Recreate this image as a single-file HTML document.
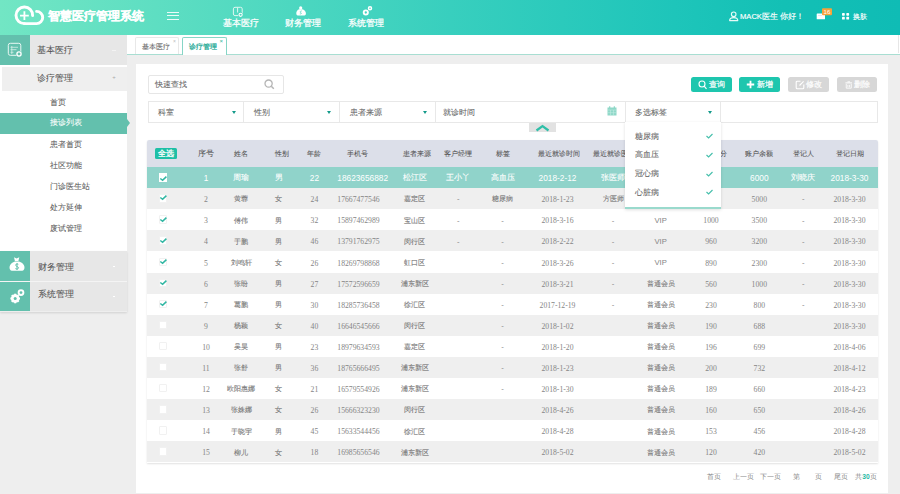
<!DOCTYPE html><html><head><meta charset="utf-8"><style>
*{margin:0;padding:0;box-sizing:border-box}
html,body{width:900px;height:494px;overflow:hidden;background:#eeeeee;font-family:"Liberation Sans", sans-serif}
.a{position:absolute}
.t{position:absolute;white-space:nowrap;line-height:1}
</style></head><body>
<div class="a" style="left:0;top:0;width:900px;height:35px;background:linear-gradient(90deg,#72e6c4 0%,#38cfbe 50%,#1ec5ba 75%,#13c0b5 87%,#0fbcb5 100%)"></div>
<svg class="a" style="left:0;top:0" width="60" height="35" viewBox="0 0 60 35">
<path d="M24.4 23.6 A8.3 8.3 0 1 1 32.6 15.6" fill="none" stroke="#fff" stroke-width="2.9" stroke-linecap="round"/>
<path d="M36.6 11.4 A6.1 6.1 0 0 1 36.6 23.6 L24.4 23.6" fill="none" stroke="#fff" stroke-width="2.9" stroke-linecap="round"/>
<path d="M20 15.7 H28.8 M24.4 11.3 V20.1" stroke="#fff" stroke-width="1.8"/>
</svg>
<span class="t" style="left:48.3px;top:16px;font-size:12px;color:#fff;transform:translateY(-50%);font-weight:bold;-webkit-text-stroke:.15px #fff;">智慧医疗管理系统</span>
<div class="a" style="left:167px;top:11.8px;width:12px;height:1.3px;background:rgba(255,255,255,.88)"></div>
<div class="a" style="left:167px;top:15.2px;width:12px;height:1.3px;background:rgba(255,255,255,.88)"></div>
<div class="a" style="left:167px;top:18.5px;width:12px;height:1.3px;background:rgba(255,255,255,.88)"></div>
<span class="t" style="left:241px;top:23px;font-size:8.6px;color:#fff;transform:translate(-50%,-50%);font-weight:normal;-webkit-text-stroke:.25px #fff;">基本医疗</span>
<span class="t" style="left:303px;top:23px;font-size:8.6px;color:#fff;transform:translate(-50%,-50%);font-weight:normal;-webkit-text-stroke:.25px #fff;">财务管理</span>
<span class="t" style="left:366px;top:23px;font-size:8.6px;color:#fff;transform:translate(-50%,-50%);font-weight:normal;-webkit-text-stroke:.25px #fff;">系统管理</span>
<svg class="a" style="left:0;top:0" width="400" height="20" viewBox="0 0 400 20">
<rect x="233.4" y="7.3" width="8.8" height="8.3" rx="1.6" fill="none" stroke="#dff7f1" stroke-width="1"/>
<path d="M237.6 7.5 V12.5" stroke="#dff7f1" stroke-width="1"/>
<circle cx="240.6" cy="14.8" r="2.5" fill="#50d4bd"/>
<circle cx="240.6" cy="14.8" r="1.6" fill="none" stroke="#fff" stroke-width="1.1"/>
<circle cx="300.7" cy="7.9" r="1.6" fill="#fff"/>
<path d="M299.2 9.3 C295.5 10.5 295.6 15.6 297.8 15.6 H304.4 C306.6 15.6 306.8 10.5 302.2 9.3 Z" fill="#fff"/>
<path d="M301.8 11 C300.3 10.8 299.6 12.2 300.7 12.6 C301.9 13 301.4 14.3 299.8 14" fill="none" stroke="#48d2bd" stroke-width=".7"/>
<circle cx="365.8" cy="12.5" r="2.1" fill="none" stroke="#fff" stroke-width="1.9"/>
<circle cx="370" cy="8.3" r="1.5" fill="none" stroke="#fff" stroke-width="1.5"/>
</svg>
<svg class="a" style="left:720px;top:0" width="180" height="30" viewBox="720 0 180 30">
<circle cx="733.7" cy="14.3" r="2.3" fill="none" stroke="#e6fbf7" stroke-width="1.1"/>
<path d="M729.6 20.6 C729.6 16.6 737.8 16.6 737.8 20.6 Z" fill="none" stroke="#e6fbf7" stroke-width="1.1" stroke-linejoin="round"/>
<rect x="816.7" y="13.5" width="8.3" height="5.8" rx=".6" fill="#fff"/>
<path d="M818 15.6 H822" stroke="#9ad" stroke-width=".5" opacity=".6"/>
<rect x="822" y="8.3" width="10" height="7" rx="1" fill="#f7a23b"/>
<text x="827" y="14" font-size="6.2" fill="#fff" text-anchor="middle" font-family="Liberation Sans">16</text>
<g fill="#fff"><rect x="842" y="13" width="2.8" height="2.8" rx=".7"/><rect x="846.3" y="13" width="2.8" height="2.8" rx=".7"/>
<rect x="842" y="16.8" width="2.8" height="2.8" rx=".7"/><rect x="846.3" y="16.8" width="2.8" height="2.8" rx=".7"/></g>
</svg>
<span class="t" style="left:740px;top:17px;font-size:7.6px;color:#fff;transform:translateY(-50%);font-weight:normal;-webkit-text-stroke:.15px #fff;">MACK医生 你好！</span>
<span class="t" style="left:853.3px;top:16.8px;font-size:7.4px;color:#fff;transform:translateY(-50%);font-weight:normal;-webkit-text-stroke:.15px #fff;">换肤</span>
<div class="a" style="left:0;top:35px;width:127px;height:276px;background:#fff"></div>
<div class="a" style="left:0;top:35px;width:29.5px;height:30px;background:#63c0ad"></div>
<div class="a" style="left:29.5px;top:35px;width:97.5px;height:30px;background:#e7e7e7"></div>
<span class="t" style="left:37px;top:50px;font-size:8.7px;color:#555;transform:translateY(-50%);font-weight:normal;-webkit-text-stroke:.07px #555;">基本医疗</span>
<div class="a" style="left:112px;top:50px;width:4px;height:1px;background:#f3f3f3"></div>
<svg class="a" style="left:7px;top:42px" width="16" height="16" viewBox="0 0 16 16">
<rect x="1.3" y="1.3" width="12.5" height="12" rx="2" fill="none" stroke="#e8f7f3" stroke-width="1"/>
<path d="M3.5 5.3h7.5M3.5 7.7h6M3.5 10.3h3M4.8 4v8" stroke="#e8f7f3" stroke-width=".8" opacity=".85"/>
<circle cx="12" cy="12" r="3" fill="#63c0ad"/>
<circle cx="12" cy="12" r="2.1" fill="none" stroke="#fff" stroke-width="1.3"/></svg>
<div class="a" style="left:1.5px;top:66.5px;width:125.5px;height:24.7px;background:#efefef"></div>
<span class="t" style="left:37px;top:78px;font-size:8.7px;color:#555;transform:translateY(-50%);font-weight:normal;-webkit-text-stroke:.07px #555;">诊疗管理</span>
<span class="t" style="left:114px;top:77px;font-size:6px;color:#aaa;transform:translate(-50%,-50%);font-weight:normal;">+</span>
<div class="a" style="left:0;top:113px;width:127px;height:21px;background:#63c0ad"></div>
<div class="a" style="left:127px;top:119px;width:0;height:0;border-top:4px solid transparent;border-bottom:4px solid transparent;border-left:3px solid #63c0ad"></div>
<span class="t" style="left:49.5px;top:103px;font-size:7.5px;color:#606060;transform:translateY(-50%);font-weight:normal;-webkit-text-stroke:.07px #606060;">首页</span>
<span class="t" style="left:49.5px;top:123.3px;font-size:7.5px;color:#fff;transform:translateY(-50%);font-weight:normal;-webkit-text-stroke:.07px #fff;">接诊列表</span>
<span class="t" style="left:49.5px;top:144.5px;font-size:7.5px;color:#606060;transform:translateY(-50%);font-weight:normal;-webkit-text-stroke:.07px #606060;">患者首页</span>
<span class="t" style="left:49.5px;top:165.7px;font-size:7.5px;color:#606060;transform:translateY(-50%);font-weight:normal;-webkit-text-stroke:.07px #606060;">社区功能</span>
<span class="t" style="left:49.5px;top:186.9px;font-size:7.5px;color:#606060;transform:translateY(-50%);font-weight:normal;-webkit-text-stroke:.07px #606060;">门诊医生站</span>
<span class="t" style="left:49.5px;top:208.1px;font-size:7.5px;color:#606060;transform:translateY(-50%);font-weight:normal;-webkit-text-stroke:.07px #606060;">处方延伸</span>
<span class="t" style="left:49.5px;top:229.2px;font-size:7.5px;color:#606060;transform:translateY(-50%);font-weight:normal;-webkit-text-stroke:.07px #606060;">废试管理</span>
<div class="a" style="left:0;top:250.5px;width:127px;height:61px;box-shadow:0 1px 2px rgba(0,0,0,.12)"></div>
<div class="a" style="left:0;top:250.5px;width:29.5px;height:30px;background:#63c0ad"></div>
<div class="a" style="left:29.5px;top:250.5px;width:97.5px;height:30px;background:#e7e7e7"></div>
<span class="t" style="left:37.5px;top:266.8px;font-size:8.7px;color:#555;transform:translateY(-50%);font-weight:normal;-webkit-text-stroke:.07px #555;">财务管理</span>
<div class="a" style="left:113px;top:265.5px;width:2px;height:1px;background:#fff"></div>
<div class="a" style="left:0;top:281px;width:29.5px;height:30px;background:#63c0ad"></div>
<div class="a" style="left:29.5px;top:281px;width:97.5px;height:30px;background:#e7e7e7"></div>
<span class="t" style="left:37.5px;top:294px;font-size:8.7px;color:#555;transform:translateY(-50%);font-weight:normal;-webkit-text-stroke:.07px #555;">系统管理</span>
<div class="a" style="left:113px;top:296px;width:2px;height:1px;background:#fff"></div>
<div class="a" style="left:0;top:280.5px;width:127px;height:0.8px;background:#f4f4f4"></div>
<svg class="a" style="left:0;top:250px" width="29" height="60" viewBox="0 250 29 60">
<path d="M14 257.3 L16.6 258.6 L19.3 257.3 L18.4 261 H14.9 Z" fill="#fff"/>
<path d="M15 261.6 C8 263.5 8.5 270.8 12 270.8 H22 C25.5 270.8 26 263.5 19 261.6 Z" fill="#fff"/>
<path d="M18.3 264.3 C16.8 263.6 15.3 264.3 15.8 265.6 C16.3 266.6 18.4 266.5 18.5 267.8 C18.6 269 16.6 269.3 15.4 268.6 M17 263 V270" fill="none" stroke="#63c0ad" stroke-width="1"/>
<g transform="translate(15.2 298.5)">
<circle r="3.1" fill="none" stroke="#fff" stroke-width="2.4"/>
<g fill="#fff"><rect x="-1" y="-4.8" width="2" height="9.6"/><rect x="-4.8" y="-1" width="9.6" height="2"/>
<rect x="-1" y="-4.8" width="2" height="9.6" transform="rotate(45)"/><rect x="-1" y="-4.8" width="2" height="9.6" transform="rotate(-45)"/></g>
<circle r="1.5" fill="#63c0ad"/></g>
<circle cx="21" cy="292.6" r="2.4" fill="none" stroke="#fff" stroke-width="1.9"/>
</svg>
<div class="a" style="left:127px;top:35px;width:773px;height:19px;background:#fff"></div>
<div class="a" style="left:127px;top:53.5px;width:773px;height:1.4px;background:#a8ded2"></div>
<div class="a" style="left:897.5px;top:35px;width:1px;height:18px;background:#e6e6e6"></div>
<div class="a" style="left:135px;top:37px;width:43.5px;height:17px;border:1px solid #e8e8e8;border-bottom:none;border-radius:2px 2px 0 0;background:#fff"></div>
<span class="t" style="left:142px;top:47px;font-size:7.3px;color:#666;transform:translateY(-50%);font-weight:normal;-webkit-text-stroke:.07px #666;">基本医疗</span>
<span class="t" style="left:174.5px;top:40.5px;font-size:5px;color:#bbb;transform:translate(-50%,-50%);font-weight:normal;">×</span>
<div class="a" style="left:181.5px;top:37px;width:45px;height:17.5px;border:1.3px solid #86d5c6;border-bottom:none;border-radius:2px 2px 0 0;background:#fff"></div>
<span class="t" style="left:188.5px;top:46.6px;font-size:7.3px;color:#2aab98;transform:translateY(-50%);font-weight:normal;-webkit-text-stroke:.25px #2aab98;">诊疗管理</span>
<span class="t" style="left:221.2px;top:40.5px;font-size:6px;color:#2bb59c;transform:translate(-50%,-50%);font-weight:normal;">×</span>
<div class="a" style="left:136px;top:64px;width:751.7px;height:428.5px;background:#fff"></div>
<div class="a" style="left:147.5px;top:74.5px;width:136px;height:19.5px;border:1px solid #e6e6e6;border-radius:2px"></div>
<span class="t" style="left:154.6px;top:84.5px;font-size:7.8px;color:#666;transform:translateY(-50%);font-weight:normal;-webkit-text-stroke:.07px #666;">快速查找</span>
<svg class="a" style="left:264px;top:78.5px" width="12" height="12" viewBox="0 0 12 12">
<circle cx="4.6" cy="4.6" r="3.6" fill="none" stroke="#b5b5b5" stroke-width="1.3"/>
<path d="M7.3 7.3 L9.8 9.8" stroke="#b5b5b5" stroke-width="1.5"/></svg>
<div class="a" style="left:691.2px;top:76.6px;width:40.5px;height:15.7px;background:#1ec6ae;border-radius:2.5px"></div>
<span class="t" style="left:708.7px;top:84.5px;font-size:7.8px;color:#fff;transform:translateY(-50%);font-weight:normal;-webkit-text-stroke:.2px #fff;">查询</span>
<svg class="a" style="left:697.7px;top:79.5px" width="9" height="10" viewBox="0 0 9 10"><circle cx="4" cy="4" r="3" fill="none" stroke="#fff" stroke-width="1.1"/><path d="M6.2 6.2 L8.5 8.8" stroke="#fff" stroke-width="1.2"/></svg>
<div class="a" style="left:739.4px;top:76.6px;width:40.5px;height:15.7px;background:#1ec6ae;border-radius:2.5px"></div>
<span class="t" style="left:756.9px;top:84.5px;font-size:7.8px;color:#fff;transform:translateY(-50%);font-weight:normal;-webkit-text-stroke:.2px #fff;">新增</span>
<svg class="a" style="left:745.9px;top:80px" width="9" height="9" viewBox="0 0 9 9"><path d="M4.5 .8V8.2M.8 4.5H8.2" stroke="#fff" stroke-width="1.8"/></svg>
<div class="a" style="left:788.3px;top:76.6px;width:40.5px;height:15.7px;background:#d7d7d7;border-radius:2.5px"></div>
<span class="t" style="left:805.8px;top:84.5px;font-size:7.8px;color:#fff;transform:translateY(-50%);font-weight:normal;-webkit-text-stroke:.2px #fff;">修改</span>
<svg class="a" style="left:794.8px;top:79.8px" width="10" height="10" viewBox="0 0 10 10"><path d="M5.5 1.2H2.2C1.6 1.2 1.2 1.6 1.2 2.2V7.8C1.2 8.4 1.6 8.8 2.2 8.8H7.8C8.4 8.8 8.8 8.4 8.8 7.8V4.5" fill="none" stroke="#fff" stroke-width="1.1"/><path d="M4.5 5.5L8.6 1.4" stroke="#fff" stroke-width="1.1"/></svg>
<div class="a" style="left:836.8px;top:76.6px;width:40.5px;height:15.7px;background:#d7d7d7;border-radius:2.5px"></div>
<span class="t" style="left:854.3px;top:84.5px;font-size:7.8px;color:#fff;transform:translateY(-50%);font-weight:normal;-webkit-text-stroke:.2px #fff;">删除</span>
<svg class="a" style="left:844.8px;top:80.5px" width="7.5" height="8.5" viewBox="0 0 9 10"><path d="M0.5 2.2H8.5M3 1H6" stroke="#fff" stroke-width="1.2"/><path d="M1.5 3.5V8.5H7.5V3.5M3.5 4.5V7.5M5.5 4.5V7.5" fill="none" stroke="#fff" stroke-width="1"/></svg>
<div class="a" style="left:147.5px;top:101px;width:730.5px;height:21.5px;border:1px solid #e8e8e8"></div>
<div class="a" style="left:243px;top:101px;width:1px;height:21.5px;background:#e8e8e8"></div>
<div class="a" style="left:338.5px;top:101px;width:1px;height:21.5px;background:#e8e8e8"></div>
<div class="a" style="left:434.5px;top:101px;width:1px;height:21.5px;background:#e8e8e8"></div>
<div class="a" style="left:624.5px;top:101px;width:1px;height:21.5px;background:#e8e8e8"></div>
<div class="a" style="left:720px;top:101px;width:1px;height:21.5px;background:#e8e8e8"></div>
<span class="t" style="left:158px;top:112.7px;font-size:7.8px;color:#666;transform:translateY(-50%);font-weight:normal;-webkit-text-stroke:.07px #666;">科室</span>
<div class="a" style="left:231.5px;top:110.5px;width:0;height:0;border-left:2.2px solid transparent;border-right:2.2px solid transparent;border-top:3px solid #139a8a"></div>
<span class="t" style="left:254px;top:112.7px;font-size:7.8px;color:#666;transform:translateY(-50%);font-weight:normal;-webkit-text-stroke:.07px #666;">性别</span>
<div class="a" style="left:327px;top:110.5px;width:0;height:0;border-left:2.2px solid transparent;border-right:2.2px solid transparent;border-top:3px solid #139a8a"></div>
<span class="t" style="left:349.5px;top:112.7px;font-size:7.8px;color:#666;transform:translateY(-50%);font-weight:normal;-webkit-text-stroke:.07px #666;">患者来源</span>
<div class="a" style="left:422.6px;top:110.5px;width:0;height:0;border-left:2.2px solid transparent;border-right:2.2px solid transparent;border-top:3px solid #139a8a"></div>
<span class="t" style="left:443px;top:112.7px;font-size:7.6px;color:#666;transform:translateY(-50%);font-weight:normal;-webkit-text-stroke:.07px #666;">就诊时间</span>
<span class="t" style="left:635.3px;top:112.7px;font-size:7.8px;color:#666;transform:translateY(-50%);font-weight:normal;-webkit-text-stroke:.07px #666;">多选标签</span>
<div class="a" style="left:708px;top:110.5px;width:0;height:0;border-left:2.2px solid transparent;border-right:2.2px solid transparent;border-top:3px solid #139a8a"></div>
<svg class="a" style="left:607px;top:106px" width="10" height="10" viewBox="0 0 10 10">
<rect x=".5" y="1.5" width="9" height="8" fill="#8fd8c8"/>
<rect x="2" y=".3" width="1.3" height="2.5" fill="#8fd8c8"/><rect x="6.7" y=".3" width="1.3" height="2.5" fill="#8fd8c8"/>
<path d="M.5 4H9.5M3.5 4V9.5M6.5 4V9.5M.5 6.7H9.5" stroke="#c8eee6" stroke-width=".5"/></svg>
<div class="a" style="left:529px;top:122.5px;width:27px;height:9.5px;background:#e2e2e2"></div>
<svg class="a" style="left:535px;top:123.5px" width="15" height="8" viewBox="0 0 15 8">
<path d="M1.5 6.5 L7.5 2 L13.5 6.5" fill="none" stroke="#2fbfa8" stroke-width="2.2"/></svg>
<div class="a" style="left:147px;top:140px;width:731px;height:323px;box-shadow:0 1px 2px rgba(0,0,0,.12);border-radius:2px 2px 0 0"></div>
<div class="a" style="left:147px;top:140px;width:731px;height:27px;background:#dcdfe9;border-radius:2px 2px 0 0"></div>
<div class="a" style="left:155.3px;top:148.4px;width:22px;height:10.7px;background:#1ebfa6;border-radius:1.5px"></div>
<span class="t" style="left:166.3px;top:153.8px;font-size:7.7px;color:#fff;transform:translate(-50%,-50%);font-weight:normal;-webkit-text-stroke:.3px #fff;">全选</span>
<span class="t" style="left:206px;top:154px;font-size:8px;color:#555;transform:translate(-50%,-50%);font-weight:normal;-webkit-text-stroke:.07px #555;">序号</span>
<span class="t" style="left:241px;top:154px;font-size:6.8px;color:#555;transform:translate(-50%,-50%);font-weight:normal;-webkit-text-stroke:.07px #555;">姓名</span>
<span class="t" style="left:282px;top:154px;font-size:6.8px;color:#555;transform:translate(-50%,-50%);font-weight:normal;-webkit-text-stroke:.07px #555;">性别</span>
<span class="t" style="left:314.4px;top:154px;font-size:6.8px;color:#555;transform:translate(-50%,-50%);font-weight:normal;-webkit-text-stroke:.07px #555;">年龄</span>
<span class="t" style="left:357.3px;top:154px;font-size:6.8px;color:#555;transform:translate(-50%,-50%);font-weight:normal;-webkit-text-stroke:.07px #555;">手机号</span>
<span class="t" style="left:416.5px;top:154px;font-size:6.8px;color:#555;transform:translate(-50%,-50%);font-weight:normal;-webkit-text-stroke:.07px #555;">患者来源</span>
<span class="t" style="left:458.3px;top:154px;font-size:6.8px;color:#555;transform:translate(-50%,-50%);font-weight:normal;-webkit-text-stroke:.07px #555;">客户经理</span>
<span class="t" style="left:502.7px;top:154px;font-size:6.8px;color:#555;transform:translate(-50%,-50%);font-weight:normal;-webkit-text-stroke:.07px #555;">标签</span>
<span class="t" style="left:559.3px;top:154px;font-size:6.8px;color:#555;transform:translate(-50%,-50%);font-weight:normal;-webkit-text-stroke:.07px #555;">最近就诊时间</span>
<span class="t" style="left:614px;top:154px;font-size:6.8px;color:#555;transform:translate(-50%,-50%);font-weight:normal;-webkit-text-stroke:.07px #555;">最近就诊医生</span>
<span class="t" style="left:660.6px;top:154px;font-size:6.8px;color:#555;transform:translate(-50%,-50%);font-weight:normal;-webkit-text-stroke:.07px #555;">会员等级</span>
<span class="t" style="left:719.5px;top:154px;font-size:6.8px;color:#555;transform:translate(-50%,-50%);font-weight:normal;-webkit-text-stroke:.07px #555;">积分</span>
<span class="t" style="left:759.3px;top:154px;font-size:6.8px;color:#555;transform:translate(-50%,-50%);font-weight:normal;-webkit-text-stroke:.07px #555;">账户余额</span>
<span class="t" style="left:803.4px;top:154px;font-size:6.8px;color:#555;transform:translate(-50%,-50%);font-weight:normal;-webkit-text-stroke:.07px #555;">登记人</span>
<span class="t" style="left:849.5px;top:154px;font-size:6.8px;color:#555;transform:translate(-50%,-50%);font-weight:normal;-webkit-text-stroke:.07px #555;">登记日期</span>
<div class="a" style="left:147px;top:167.0px;width:731px;height:21.200000000000003px;background:#90d3ca"></div>
<div class="a" style="left:159.2px;top:173.35000000000002px;width:8.3px;height:8.3px;background:#fff"></div>
<svg class="a" style="left:159.2px;top:173.55px" width="9" height="9" viewBox="0 0 9 9"><path d="M1.3 4.5 L3.6 6.3 L7.4 2.6" fill="none" stroke="#2fb6a2" stroke-width="1.5"/></svg>
<span class="t" style="left:206px;top:178.05px;font-size:8.3px;color:#fff;transform:translate(-50%,-50%);font-weight:normal;-webkit-text-stroke:0;">1</span>
<span class="t" style="left:241px;top:178.05px;font-size:7.6px;color:#fff;transform:translate(-50%,-50%);font-weight:normal;-webkit-text-stroke:.1px #fff;">周瑜</span>
<span class="t" style="left:278.7px;top:178.05px;font-size:7.6px;color:#fff;transform:translate(-50%,-50%);font-weight:normal;-webkit-text-stroke:.1px #fff;">男</span>
<span class="t" style="left:314.4px;top:178.05px;font-size:8.3px;color:#fff;transform:translate(-50%,-50%);font-weight:normal;-webkit-text-stroke:0;">22</span>
<span class="t" style="left:337.3px;top:178.05px;font-size:8.3px;color:#fff;transform:translateY(-50%);font-weight:normal;-webkit-text-stroke:0;">18623656882</span>
<span class="t" style="left:414.5px;top:178.05px;font-size:7.6px;color:#fff;transform:translate(-50%,-50%);font-weight:normal;-webkit-text-stroke:.1px #fff;">松江区</span>
<span class="t" style="left:458.3px;top:178.05px;font-size:7.6px;color:#fff;transform:translate(-50%,-50%);font-weight:normal;-webkit-text-stroke:.1px #fff;">王小丫</span>
<span class="t" style="left:502.5px;top:178.05px;font-size:7.6px;color:#fff;transform:translate(-50%,-50%);font-weight:normal;-webkit-text-stroke:.1px #fff;">高血压</span>
<span class="t" style="left:557.5px;top:178.05px;font-size:8.3px;color:#fff;transform:translate(-50%,-50%);font-weight:normal;-webkit-text-stroke:0;">2018-2-12</span>
<span class="t" style="left:613px;top:178.05px;font-size:7.6px;color:#fff;transform:translate(-50%,-50%);font-weight:normal;-webkit-text-stroke:.1px #fff;">张医师</span>
<span class="t" style="left:759.3px;top:178.05px;font-size:8.3px;color:#fff;transform:translate(-50%,-50%);font-weight:normal;-webkit-text-stroke:0;">6000</span>
<span class="t" style="left:803.4px;top:178.05px;font-size:7.6px;color:#fff;transform:translate(-50%,-50%);font-weight:normal;-webkit-text-stroke:.1px #fff;">刘晓庆</span>
<span class="t" style="left:849.5px;top:178.05px;font-size:8.3px;color:#fff;transform:translate(-50%,-50%);font-weight:normal;-webkit-text-stroke:0;">2018-3-30</span>
<div class="a" style="left:147px;top:188.1px;width:731px;height:21.200000000000003px;background:#efefef"></div>
<div class="a" style="left:159.2px;top:194.25px;width:8.3px;height:8.3px;background:#fff;border:0.6px solid #f1f1f1;border-radius:1px"></div>
<svg class="a" style="left:159.2px;top:193.45000000000002px" width="9" height="9" viewBox="0 0 9 9"><path d="M1.3 4.5 L3.6 6.3 L7.4 2.6" fill="none" stroke="#2fb6a2" stroke-width="1.5"/></svg>
<span class="t" style="left:206px;top:200.25px;font-size:7.7px;color:#858585;transform:translate(-50%,-50%);font-weight:normal;font-family:'Liberation Serif',serif;">2</span>
<span class="t" style="left:241px;top:199.45000000000002px;font-size:6.5px;color:#777;transform:translate(-50%,-50%);font-weight:normal;-webkit-text-stroke:.1px #777;">黄蓉</span>
<span class="t" style="left:278.7px;top:199.45000000000002px;font-size:6.5px;color:#777;transform:translate(-50%,-50%);font-weight:normal;-webkit-text-stroke:.1px #777;">女</span>
<span class="t" style="left:314.4px;top:200.25px;font-size:7.7px;color:#858585;transform:translate(-50%,-50%);font-weight:normal;font-family:'Liberation Serif',serif;">24</span>
<span class="t" style="left:337.3px;top:200.25px;font-size:7.7px;color:#858585;transform:translateY(-50%);font-weight:normal;font-family:'Liberation Serif',serif;">17667477546</span>
<span class="t" style="left:414.5px;top:199.45000000000002px;font-size:6.5px;color:#777;transform:translate(-50%,-50%);font-weight:normal;-webkit-text-stroke:.1px #777;">嘉定区</span>
<span class="t" style="left:458.3px;top:199.45000000000002px;font-size:7.7px;color:#858585;transform:translate(-50%,-50%);font-weight:normal;">-</span>
<span class="t" style="left:502.5px;top:199.45000000000002px;font-size:6.5px;color:#777;transform:translate(-50%,-50%);font-weight:normal;-webkit-text-stroke:.1px #777;">糖尿病</span>
<span class="t" style="left:557.5px;top:200.25px;font-size:7.7px;color:#858585;transform:translate(-50%,-50%);font-weight:normal;font-family:'Liberation Serif',serif;">2018-1-23</span>
<span class="t" style="left:613px;top:199.45000000000002px;font-size:6.5px;color:#777;transform:translate(-50%,-50%);font-weight:normal;-webkit-text-stroke:.1px #777;">方医师</span>
<span class="t" style="left:759.3px;top:200.25px;font-size:7.7px;color:#858585;transform:translate(-50%,-50%);font-weight:normal;font-family:'Liberation Serif',serif;">5000</span>
<span class="t" style="left:803.4px;top:199.45000000000002px;font-size:7.7px;color:#858585;transform:translate(-50%,-50%);font-weight:normal;">-</span>
<span class="t" style="left:849.5px;top:200.25px;font-size:7.7px;color:#858585;transform:translate(-50%,-50%);font-weight:normal;font-family:'Liberation Serif',serif;">2018-3-30</span>
<div class="a" style="left:147px;top:209.2px;width:731px;height:21.200000000000003px;background:#ffffff"></div>
<div class="a" style="left:159.2px;top:215.35px;width:8.3px;height:8.3px;background:#fff;border:0.6px solid #f1f1f1;border-radius:1px"></div>
<svg class="a" style="left:159.2px;top:214.55px" width="9" height="9" viewBox="0 0 9 9"><path d="M1.3 4.5 L3.6 6.3 L7.4 2.6" fill="none" stroke="#2fb6a2" stroke-width="1.5"/></svg>
<span class="t" style="left:206px;top:221.35px;font-size:7.7px;color:#858585;transform:translate(-50%,-50%);font-weight:normal;font-family:'Liberation Serif',serif;">3</span>
<span class="t" style="left:241px;top:220.55px;font-size:6.5px;color:#777;transform:translate(-50%,-50%);font-weight:normal;-webkit-text-stroke:.1px #777;">傅伟</span>
<span class="t" style="left:278.7px;top:220.55px;font-size:6.5px;color:#777;transform:translate(-50%,-50%);font-weight:normal;-webkit-text-stroke:.1px #777;">男</span>
<span class="t" style="left:314.4px;top:221.35px;font-size:7.7px;color:#858585;transform:translate(-50%,-50%);font-weight:normal;font-family:'Liberation Serif',serif;">32</span>
<span class="t" style="left:337.3px;top:221.35px;font-size:7.7px;color:#858585;transform:translateY(-50%);font-weight:normal;font-family:'Liberation Serif',serif;">15897462989</span>
<span class="t" style="left:414.5px;top:220.55px;font-size:6.5px;color:#777;transform:translate(-50%,-50%);font-weight:normal;-webkit-text-stroke:.1px #777;">宝山区</span>
<span class="t" style="left:458.3px;top:220.55px;font-size:7.7px;color:#858585;transform:translate(-50%,-50%);font-weight:normal;">-</span>
<span class="t" style="left:502.5px;top:220.55px;font-size:7.7px;color:#858585;transform:translate(-50%,-50%);font-weight:normal;">-</span>
<span class="t" style="left:557.5px;top:221.35px;font-size:7.7px;color:#858585;transform:translate(-50%,-50%);font-weight:normal;font-family:'Liberation Serif',serif;">2018-3-16</span>
<span class="t" style="left:613px;top:220.55px;font-size:7.7px;color:#858585;transform:translate(-50%,-50%);font-weight:normal;">-</span>
<span class="t" style="left:660.6px;top:220.55px;font-size:7.7px;color:#858585;transform:translate(-50%,-50%);font-weight:normal;">VIP</span>
<span class="t" style="left:711px;top:221.35px;font-size:7.7px;color:#858585;transform:translate(-50%,-50%);font-weight:normal;font-family:'Liberation Serif',serif;">1000</span>
<span class="t" style="left:759.3px;top:221.35px;font-size:7.7px;color:#858585;transform:translate(-50%,-50%);font-weight:normal;font-family:'Liberation Serif',serif;">3500</span>
<span class="t" style="left:803.4px;top:220.55px;font-size:7.7px;color:#858585;transform:translate(-50%,-50%);font-weight:normal;">-</span>
<span class="t" style="left:849.5px;top:221.35px;font-size:7.7px;color:#858585;transform:translate(-50%,-50%);font-weight:normal;font-family:'Liberation Serif',serif;">2018-3-30</span>
<div class="a" style="left:147px;top:230.3px;width:731px;height:21.200000000000003px;background:#efefef"></div>
<div class="a" style="left:159.2px;top:236.45000000000002px;width:8.3px;height:8.3px;background:#fff;border:0.6px solid #f1f1f1;border-radius:1px"></div>
<svg class="a" style="left:159.2px;top:235.65000000000003px" width="9" height="9" viewBox="0 0 9 9"><path d="M1.3 4.5 L3.6 6.3 L7.4 2.6" fill="none" stroke="#2fb6a2" stroke-width="1.5"/></svg>
<span class="t" style="left:206px;top:242.45000000000002px;font-size:7.7px;color:#858585;transform:translate(-50%,-50%);font-weight:normal;font-family:'Liberation Serif',serif;">4</span>
<span class="t" style="left:241px;top:241.65000000000003px;font-size:6.5px;color:#777;transform:translate(-50%,-50%);font-weight:normal;-webkit-text-stroke:.1px #777;">于鹏</span>
<span class="t" style="left:278.7px;top:241.65000000000003px;font-size:6.5px;color:#777;transform:translate(-50%,-50%);font-weight:normal;-webkit-text-stroke:.1px #777;">男</span>
<span class="t" style="left:314.4px;top:242.45000000000002px;font-size:7.7px;color:#858585;transform:translate(-50%,-50%);font-weight:normal;font-family:'Liberation Serif',serif;">46</span>
<span class="t" style="left:337.3px;top:242.45000000000002px;font-size:7.7px;color:#858585;transform:translateY(-50%);font-weight:normal;font-family:'Liberation Serif',serif;">13791762975</span>
<span class="t" style="left:414.5px;top:241.65000000000003px;font-size:6.5px;color:#777;transform:translate(-50%,-50%);font-weight:normal;-webkit-text-stroke:.1px #777;">闵行区</span>
<span class="t" style="left:458.3px;top:241.65000000000003px;font-size:7.7px;color:#858585;transform:translate(-50%,-50%);font-weight:normal;">-</span>
<span class="t" style="left:502.5px;top:241.65000000000003px;font-size:7.7px;color:#858585;transform:translate(-50%,-50%);font-weight:normal;">-</span>
<span class="t" style="left:557.5px;top:242.45000000000002px;font-size:7.7px;color:#858585;transform:translate(-50%,-50%);font-weight:normal;font-family:'Liberation Serif',serif;">2018-2-22</span>
<span class="t" style="left:613px;top:241.65000000000003px;font-size:7.7px;color:#858585;transform:translate(-50%,-50%);font-weight:normal;">-</span>
<span class="t" style="left:660.6px;top:241.65000000000003px;font-size:7.7px;color:#858585;transform:translate(-50%,-50%);font-weight:normal;">VIP</span>
<span class="t" style="left:711px;top:242.45000000000002px;font-size:7.7px;color:#858585;transform:translate(-50%,-50%);font-weight:normal;font-family:'Liberation Serif',serif;">960</span>
<span class="t" style="left:759.3px;top:242.45000000000002px;font-size:7.7px;color:#858585;transform:translate(-50%,-50%);font-weight:normal;font-family:'Liberation Serif',serif;">3200</span>
<span class="t" style="left:803.4px;top:241.65000000000003px;font-size:7.7px;color:#858585;transform:translate(-50%,-50%);font-weight:normal;">-</span>
<span class="t" style="left:849.5px;top:242.45000000000002px;font-size:7.7px;color:#858585;transform:translate(-50%,-50%);font-weight:normal;font-family:'Liberation Serif',serif;">2018-3-30</span>
<div class="a" style="left:147px;top:251.4px;width:731px;height:21.200000000000003px;background:#ffffff"></div>
<div class="a" style="left:159.2px;top:257.55px;width:8.3px;height:8.3px;background:#fff;border:0.6px solid #f1f1f1;border-radius:1px"></div>
<svg class="a" style="left:159.2px;top:256.75px" width="9" height="9" viewBox="0 0 9 9"><path d="M1.3 4.5 L3.6 6.3 L7.4 2.6" fill="none" stroke="#2fb6a2" stroke-width="1.5"/></svg>
<span class="t" style="left:206px;top:263.55px;font-size:7.7px;color:#858585;transform:translate(-50%,-50%);font-weight:normal;font-family:'Liberation Serif',serif;">5</span>
<span class="t" style="left:241px;top:262.75px;font-size:6.5px;color:#777;transform:translate(-50%,-50%);font-weight:normal;-webkit-text-stroke:.1px #777;">刘鸣轩</span>
<span class="t" style="left:278.7px;top:262.75px;font-size:6.5px;color:#777;transform:translate(-50%,-50%);font-weight:normal;-webkit-text-stroke:.1px #777;">女</span>
<span class="t" style="left:314.4px;top:263.55px;font-size:7.7px;color:#858585;transform:translate(-50%,-50%);font-weight:normal;font-family:'Liberation Serif',serif;">26</span>
<span class="t" style="left:337.3px;top:263.55px;font-size:7.7px;color:#858585;transform:translateY(-50%);font-weight:normal;font-family:'Liberation Serif',serif;">18269798868</span>
<span class="t" style="left:414.5px;top:262.75px;font-size:6.5px;color:#777;transform:translate(-50%,-50%);font-weight:normal;-webkit-text-stroke:.1px #777;">虹口区</span>
<span class="t" style="left:502.5px;top:262.75px;font-size:7.7px;color:#858585;transform:translate(-50%,-50%);font-weight:normal;">-</span>
<span class="t" style="left:557.5px;top:263.55px;font-size:7.7px;color:#858585;transform:translate(-50%,-50%);font-weight:normal;font-family:'Liberation Serif',serif;">2018-3-26</span>
<span class="t" style="left:613px;top:262.75px;font-size:7.7px;color:#858585;transform:translate(-50%,-50%);font-weight:normal;">-</span>
<span class="t" style="left:660.6px;top:262.75px;font-size:7.7px;color:#858585;transform:translate(-50%,-50%);font-weight:normal;">VIP</span>
<span class="t" style="left:711px;top:263.55px;font-size:7.7px;color:#858585;transform:translate(-50%,-50%);font-weight:normal;font-family:'Liberation Serif',serif;">890</span>
<span class="t" style="left:759.3px;top:263.55px;font-size:7.7px;color:#858585;transform:translate(-50%,-50%);font-weight:normal;font-family:'Liberation Serif',serif;">2300</span>
<span class="t" style="left:803.4px;top:262.75px;font-size:7.7px;color:#858585;transform:translate(-50%,-50%);font-weight:normal;">-</span>
<span class="t" style="left:849.5px;top:263.55px;font-size:7.7px;color:#858585;transform:translate(-50%,-50%);font-weight:normal;font-family:'Liberation Serif',serif;">2018-3-30</span>
<div class="a" style="left:147px;top:272.5px;width:731px;height:21.200000000000003px;background:#efefef"></div>
<div class="a" style="left:159.2px;top:278.65000000000003px;width:8.3px;height:8.3px;background:#fff;border:0.6px solid #f1f1f1;border-radius:1px"></div>
<svg class="a" style="left:159.2px;top:277.85px" width="9" height="9" viewBox="0 0 9 9"><path d="M1.3 4.5 L3.6 6.3 L7.4 2.6" fill="none" stroke="#2fb6a2" stroke-width="1.5"/></svg>
<span class="t" style="left:206px;top:284.65000000000003px;font-size:7.7px;color:#858585;transform:translate(-50%,-50%);font-weight:normal;font-family:'Liberation Serif',serif;">6</span>
<span class="t" style="left:241px;top:283.85px;font-size:6.5px;color:#777;transform:translate(-50%,-50%);font-weight:normal;-webkit-text-stroke:.1px #777;">张盼</span>
<span class="t" style="left:278.7px;top:283.85px;font-size:6.5px;color:#777;transform:translate(-50%,-50%);font-weight:normal;-webkit-text-stroke:.1px #777;">男</span>
<span class="t" style="left:314.4px;top:284.65000000000003px;font-size:7.7px;color:#858585;transform:translate(-50%,-50%);font-weight:normal;font-family:'Liberation Serif',serif;">27</span>
<span class="t" style="left:337.3px;top:284.65000000000003px;font-size:7.7px;color:#858585;transform:translateY(-50%);font-weight:normal;font-family:'Liberation Serif',serif;">17572596659</span>
<span class="t" style="left:414.5px;top:283.85px;font-size:6.5px;color:#777;transform:translate(-50%,-50%);font-weight:normal;-webkit-text-stroke:.1px #777;">浦东新区</span>
<span class="t" style="left:502.5px;top:283.85px;font-size:7.7px;color:#858585;transform:translate(-50%,-50%);font-weight:normal;">-</span>
<span class="t" style="left:557.5px;top:284.65000000000003px;font-size:7.7px;color:#858585;transform:translate(-50%,-50%);font-weight:normal;font-family:'Liberation Serif',serif;">2018-3-21</span>
<span class="t" style="left:613px;top:283.85px;font-size:7.7px;color:#858585;transform:translate(-50%,-50%);font-weight:normal;">-</span>
<span class="t" style="left:660.6px;top:283.85px;font-size:6.5px;color:#777;transform:translate(-50%,-50%);font-weight:normal;-webkit-text-stroke:.1px #777;">普通会员</span>
<span class="t" style="left:711px;top:284.65000000000003px;font-size:7.7px;color:#858585;transform:translate(-50%,-50%);font-weight:normal;font-family:'Liberation Serif',serif;">560</span>
<span class="t" style="left:759.3px;top:284.65000000000003px;font-size:7.7px;color:#858585;transform:translate(-50%,-50%);font-weight:normal;font-family:'Liberation Serif',serif;">1000</span>
<span class="t" style="left:803.4px;top:283.85px;font-size:7.7px;color:#858585;transform:translate(-50%,-50%);font-weight:normal;">-</span>
<span class="t" style="left:849.5px;top:284.65000000000003px;font-size:7.7px;color:#858585;transform:translate(-50%,-50%);font-weight:normal;font-family:'Liberation Serif',serif;">2018-3-30</span>
<div class="a" style="left:147px;top:293.6px;width:731px;height:21.200000000000003px;background:#ffffff"></div>
<div class="a" style="left:159.2px;top:299.75000000000006px;width:8.3px;height:8.3px;background:#fff;border:0.6px solid #f1f1f1;border-radius:1px"></div>
<svg class="a" style="left:159.2px;top:298.95000000000005px" width="9" height="9" viewBox="0 0 9 9"><path d="M1.3 4.5 L3.6 6.3 L7.4 2.6" fill="none" stroke="#2fb6a2" stroke-width="1.5"/></svg>
<span class="t" style="left:206px;top:305.75000000000006px;font-size:7.7px;color:#858585;transform:translate(-50%,-50%);font-weight:normal;font-family:'Liberation Serif',serif;">7</span>
<span class="t" style="left:241px;top:304.95000000000005px;font-size:6.5px;color:#777;transform:translate(-50%,-50%);font-weight:normal;-webkit-text-stroke:.1px #777;">葛鹏</span>
<span class="t" style="left:278.7px;top:304.95000000000005px;font-size:6.5px;color:#777;transform:translate(-50%,-50%);font-weight:normal;-webkit-text-stroke:.1px #777;">男</span>
<span class="t" style="left:314.4px;top:305.75000000000006px;font-size:7.7px;color:#858585;transform:translate(-50%,-50%);font-weight:normal;font-family:'Liberation Serif',serif;">30</span>
<span class="t" style="left:337.3px;top:305.75000000000006px;font-size:7.7px;color:#858585;transform:translateY(-50%);font-weight:normal;font-family:'Liberation Serif',serif;">18285736458</span>
<span class="t" style="left:414.5px;top:304.95000000000005px;font-size:6.5px;color:#777;transform:translate(-50%,-50%);font-weight:normal;-webkit-text-stroke:.1px #777;">徐汇区</span>
<span class="t" style="left:502.5px;top:304.95000000000005px;font-size:7.7px;color:#858585;transform:translate(-50%,-50%);font-weight:normal;">-</span>
<span class="t" style="left:557.5px;top:305.75000000000006px;font-size:7.7px;color:#858585;transform:translate(-50%,-50%);font-weight:normal;font-family:'Liberation Serif',serif;">2017-12-19</span>
<span class="t" style="left:613px;top:304.95000000000005px;font-size:7.7px;color:#858585;transform:translate(-50%,-50%);font-weight:normal;">-</span>
<span class="t" style="left:660.6px;top:304.95000000000005px;font-size:6.5px;color:#777;transform:translate(-50%,-50%);font-weight:normal;-webkit-text-stroke:.1px #777;">普通会员</span>
<span class="t" style="left:711px;top:305.75000000000006px;font-size:7.7px;color:#858585;transform:translate(-50%,-50%);font-weight:normal;font-family:'Liberation Serif',serif;">230</span>
<span class="t" style="left:759.3px;top:305.75000000000006px;font-size:7.7px;color:#858585;transform:translate(-50%,-50%);font-weight:normal;font-family:'Liberation Serif',serif;">800</span>
<span class="t" style="left:803.4px;top:304.95000000000005px;font-size:7.7px;color:#858585;transform:translate(-50%,-50%);font-weight:normal;">-</span>
<span class="t" style="left:849.5px;top:305.75000000000006px;font-size:7.7px;color:#858585;transform:translate(-50%,-50%);font-weight:normal;font-family:'Liberation Serif',serif;">2018-3-30</span>
<div class="a" style="left:147px;top:314.70000000000005px;width:731px;height:21.200000000000003px;background:#efefef"></div>
<div class="a" style="left:159.2px;top:320.8500000000001px;width:8.3px;height:8.3px;background:#fff;border:0.6px solid #f1f1f1;border-radius:1px"></div>
<span class="t" style="left:206px;top:326.8500000000001px;font-size:7.7px;color:#858585;transform:translate(-50%,-50%);font-weight:normal;font-family:'Liberation Serif',serif;">9</span>
<span class="t" style="left:241px;top:326.05000000000007px;font-size:6.5px;color:#777;transform:translate(-50%,-50%);font-weight:normal;-webkit-text-stroke:.1px #777;">杨颖</span>
<span class="t" style="left:278.7px;top:326.05000000000007px;font-size:6.5px;color:#777;transform:translate(-50%,-50%);font-weight:normal;-webkit-text-stroke:.1px #777;">女</span>
<span class="t" style="left:314.4px;top:326.8500000000001px;font-size:7.7px;color:#858585;transform:translate(-50%,-50%);font-weight:normal;font-family:'Liberation Serif',serif;">40</span>
<span class="t" style="left:337.3px;top:326.8500000000001px;font-size:7.7px;color:#858585;transform:translateY(-50%);font-weight:normal;font-family:'Liberation Serif',serif;">16646545666</span>
<span class="t" style="left:414.5px;top:326.05000000000007px;font-size:6.5px;color:#777;transform:translate(-50%,-50%);font-weight:normal;-webkit-text-stroke:.1px #777;">闵行区</span>
<span class="t" style="left:502.5px;top:326.05000000000007px;font-size:7.7px;color:#858585;transform:translate(-50%,-50%);font-weight:normal;">-</span>
<span class="t" style="left:557.5px;top:326.8500000000001px;font-size:7.7px;color:#858585;transform:translate(-50%,-50%);font-weight:normal;font-family:'Liberation Serif',serif;">2018-1-02</span>
<span class="t" style="left:660.6px;top:326.05000000000007px;font-size:6.5px;color:#777;transform:translate(-50%,-50%);font-weight:normal;-webkit-text-stroke:.1px #777;">普通会员</span>
<span class="t" style="left:711px;top:326.8500000000001px;font-size:7.7px;color:#858585;transform:translate(-50%,-50%);font-weight:normal;font-family:'Liberation Serif',serif;">190</span>
<span class="t" style="left:759.3px;top:326.8500000000001px;font-size:7.7px;color:#858585;transform:translate(-50%,-50%);font-weight:normal;font-family:'Liberation Serif',serif;">688</span>
<span class="t" style="left:849.5px;top:326.8500000000001px;font-size:7.7px;color:#858585;transform:translate(-50%,-50%);font-weight:normal;font-family:'Liberation Serif',serif;">2018-3-30</span>
<div class="a" style="left:147px;top:335.8px;width:731px;height:21.200000000000003px;background:#ffffff"></div>
<div class="a" style="left:159.2px;top:341.95000000000005px;width:8.3px;height:8.3px;background:#fff;border:0.6px solid #f1f1f1;border-radius:1px"></div>
<span class="t" style="left:206px;top:347.95000000000005px;font-size:7.7px;color:#858585;transform:translate(-50%,-50%);font-weight:normal;font-family:'Liberation Serif',serif;">10</span>
<span class="t" style="left:241px;top:347.15000000000003px;font-size:6.5px;color:#777;transform:translate(-50%,-50%);font-weight:normal;-webkit-text-stroke:.1px #777;">吴昊</span>
<span class="t" style="left:278.7px;top:347.15000000000003px;font-size:6.5px;color:#777;transform:translate(-50%,-50%);font-weight:normal;-webkit-text-stroke:.1px #777;">男</span>
<span class="t" style="left:314.4px;top:347.95000000000005px;font-size:7.7px;color:#858585;transform:translate(-50%,-50%);font-weight:normal;font-family:'Liberation Serif',serif;">23</span>
<span class="t" style="left:337.3px;top:347.95000000000005px;font-size:7.7px;color:#858585;transform:translateY(-50%);font-weight:normal;font-family:'Liberation Serif',serif;">18979634593</span>
<span class="t" style="left:414.5px;top:347.15000000000003px;font-size:6.5px;color:#777;transform:translate(-50%,-50%);font-weight:normal;-webkit-text-stroke:.1px #777;">嘉定区</span>
<span class="t" style="left:502.5px;top:347.15000000000003px;font-size:7.7px;color:#858585;transform:translate(-50%,-50%);font-weight:normal;">-</span>
<span class="t" style="left:557.5px;top:347.95000000000005px;font-size:7.7px;color:#858585;transform:translate(-50%,-50%);font-weight:normal;font-family:'Liberation Serif',serif;">2018-1-20</span>
<span class="t" style="left:660.6px;top:347.15000000000003px;font-size:6.5px;color:#777;transform:translate(-50%,-50%);font-weight:normal;-webkit-text-stroke:.1px #777;">普通会员</span>
<span class="t" style="left:711px;top:347.95000000000005px;font-size:7.7px;color:#858585;transform:translate(-50%,-50%);font-weight:normal;font-family:'Liberation Serif',serif;">196</span>
<span class="t" style="left:759.3px;top:347.95000000000005px;font-size:7.7px;color:#858585;transform:translate(-50%,-50%);font-weight:normal;font-family:'Liberation Serif',serif;">699</span>
<span class="t" style="left:849.5px;top:347.95000000000005px;font-size:7.7px;color:#858585;transform:translate(-50%,-50%);font-weight:normal;font-family:'Liberation Serif',serif;">2018-4-06</span>
<div class="a" style="left:147px;top:356.9px;width:731px;height:21.200000000000003px;background:#efefef"></div>
<div class="a" style="left:159.2px;top:363.05px;width:8.3px;height:8.3px;background:#fff;border:0.6px solid #f1f1f1;border-radius:1px"></div>
<span class="t" style="left:206px;top:369.05px;font-size:7.7px;color:#858585;transform:translate(-50%,-50%);font-weight:normal;font-family:'Liberation Serif',serif;">11</span>
<span class="t" style="left:241px;top:368.25px;font-size:6.5px;color:#777;transform:translate(-50%,-50%);font-weight:normal;-webkit-text-stroke:.1px #777;">张舒</span>
<span class="t" style="left:278.7px;top:368.25px;font-size:6.5px;color:#777;transform:translate(-50%,-50%);font-weight:normal;-webkit-text-stroke:.1px #777;">男</span>
<span class="t" style="left:314.4px;top:369.05px;font-size:7.7px;color:#858585;transform:translate(-50%,-50%);font-weight:normal;font-family:'Liberation Serif',serif;">36</span>
<span class="t" style="left:337.3px;top:369.05px;font-size:7.7px;color:#858585;transform:translateY(-50%);font-weight:normal;font-family:'Liberation Serif',serif;">18765666495</span>
<span class="t" style="left:414.5px;top:368.25px;font-size:6.5px;color:#777;transform:translate(-50%,-50%);font-weight:normal;-webkit-text-stroke:.1px #777;">浦东新区</span>
<span class="t" style="left:502.5px;top:368.25px;font-size:7.7px;color:#858585;transform:translate(-50%,-50%);font-weight:normal;">-</span>
<span class="t" style="left:557.5px;top:369.05px;font-size:7.7px;color:#858585;transform:translate(-50%,-50%);font-weight:normal;font-family:'Liberation Serif',serif;">2018-1-23</span>
<span class="t" style="left:660.6px;top:368.25px;font-size:6.5px;color:#777;transform:translate(-50%,-50%);font-weight:normal;-webkit-text-stroke:.1px #777;">普通会员</span>
<span class="t" style="left:711px;top:369.05px;font-size:7.7px;color:#858585;transform:translate(-50%,-50%);font-weight:normal;font-family:'Liberation Serif',serif;">200</span>
<span class="t" style="left:759.3px;top:369.05px;font-size:7.7px;color:#858585;transform:translate(-50%,-50%);font-weight:normal;font-family:'Liberation Serif',serif;">732</span>
<span class="t" style="left:849.5px;top:369.05px;font-size:7.7px;color:#858585;transform:translate(-50%,-50%);font-weight:normal;font-family:'Liberation Serif',serif;">2018-4-12</span>
<div class="a" style="left:147px;top:378.0px;width:731px;height:21.200000000000003px;background:#ffffff"></div>
<div class="a" style="left:159.2px;top:384.15000000000003px;width:8.3px;height:8.3px;background:#fff;border:0.6px solid #f1f1f1;border-radius:1px"></div>
<span class="t" style="left:206px;top:390.15000000000003px;font-size:7.7px;color:#858585;transform:translate(-50%,-50%);font-weight:normal;font-family:'Liberation Serif',serif;">12</span>
<span class="t" style="left:241px;top:389.35px;font-size:6.5px;color:#777;transform:translate(-50%,-50%);font-weight:normal;-webkit-text-stroke:.1px #777;">欧阳惠娜</span>
<span class="t" style="left:278.7px;top:389.35px;font-size:6.5px;color:#777;transform:translate(-50%,-50%);font-weight:normal;-webkit-text-stroke:.1px #777;">女</span>
<span class="t" style="left:314.4px;top:390.15000000000003px;font-size:7.7px;color:#858585;transform:translate(-50%,-50%);font-weight:normal;font-family:'Liberation Serif',serif;">21</span>
<span class="t" style="left:337.3px;top:390.15000000000003px;font-size:7.7px;color:#858585;transform:translateY(-50%);font-weight:normal;font-family:'Liberation Serif',serif;">16579554926</span>
<span class="t" style="left:414.5px;top:389.35px;font-size:6.5px;color:#777;transform:translate(-50%,-50%);font-weight:normal;-webkit-text-stroke:.1px #777;">浦东新区</span>
<span class="t" style="left:502.5px;top:389.35px;font-size:7.7px;color:#858585;transform:translate(-50%,-50%);font-weight:normal;">-</span>
<span class="t" style="left:557.5px;top:390.15000000000003px;font-size:7.7px;color:#858585;transform:translate(-50%,-50%);font-weight:normal;font-family:'Liberation Serif',serif;">2018-1-30</span>
<span class="t" style="left:660.6px;top:389.35px;font-size:6.5px;color:#777;transform:translate(-50%,-50%);font-weight:normal;-webkit-text-stroke:.1px #777;">普通会员</span>
<span class="t" style="left:711px;top:390.15000000000003px;font-size:7.7px;color:#858585;transform:translate(-50%,-50%);font-weight:normal;font-family:'Liberation Serif',serif;">189</span>
<span class="t" style="left:759.3px;top:390.15000000000003px;font-size:7.7px;color:#858585;transform:translate(-50%,-50%);font-weight:normal;font-family:'Liberation Serif',serif;">660</span>
<span class="t" style="left:849.5px;top:390.15000000000003px;font-size:7.7px;color:#858585;transform:translate(-50%,-50%);font-weight:normal;font-family:'Liberation Serif',serif;">2018-4-23</span>
<div class="a" style="left:147px;top:399.1px;width:731px;height:21.200000000000003px;background:#efefef"></div>
<div class="a" style="left:159.2px;top:405.25000000000006px;width:8.3px;height:8.3px;background:#fff;border:0.6px solid #f1f1f1;border-radius:1px"></div>
<span class="t" style="left:206px;top:411.25000000000006px;font-size:7.7px;color:#858585;transform:translate(-50%,-50%);font-weight:normal;font-family:'Liberation Serif',serif;">13</span>
<span class="t" style="left:241px;top:410.45000000000005px;font-size:6.5px;color:#777;transform:translate(-50%,-50%);font-weight:normal;-webkit-text-stroke:.1px #777;">张姝娜</span>
<span class="t" style="left:278.7px;top:410.45000000000005px;font-size:6.5px;color:#777;transform:translate(-50%,-50%);font-weight:normal;-webkit-text-stroke:.1px #777;">女</span>
<span class="t" style="left:314.4px;top:411.25000000000006px;font-size:7.7px;color:#858585;transform:translate(-50%,-50%);font-weight:normal;font-family:'Liberation Serif',serif;">26</span>
<span class="t" style="left:337.3px;top:411.25000000000006px;font-size:7.7px;color:#858585;transform:translateY(-50%);font-weight:normal;font-family:'Liberation Serif',serif;">15666323230</span>
<span class="t" style="left:414.5px;top:410.45000000000005px;font-size:6.5px;color:#777;transform:translate(-50%,-50%);font-weight:normal;-webkit-text-stroke:.1px #777;">闵行区</span>
<span class="t" style="left:557.5px;top:411.25000000000006px;font-size:7.7px;color:#858585;transform:translate(-50%,-50%);font-weight:normal;font-family:'Liberation Serif',serif;">2018-4-26</span>
<span class="t" style="left:660.6px;top:410.45000000000005px;font-size:6.5px;color:#777;transform:translate(-50%,-50%);font-weight:normal;-webkit-text-stroke:.1px #777;">普通会员</span>
<span class="t" style="left:711px;top:411.25000000000006px;font-size:7.7px;color:#858585;transform:translate(-50%,-50%);font-weight:normal;font-family:'Liberation Serif',serif;">160</span>
<span class="t" style="left:759.3px;top:411.25000000000006px;font-size:7.7px;color:#858585;transform:translate(-50%,-50%);font-weight:normal;font-family:'Liberation Serif',serif;">650</span>
<span class="t" style="left:849.5px;top:411.25000000000006px;font-size:7.7px;color:#858585;transform:translate(-50%,-50%);font-weight:normal;font-family:'Liberation Serif',serif;">2018-4-26</span>
<div class="a" style="left:147px;top:420.20000000000005px;width:731px;height:21.200000000000003px;background:#ffffff"></div>
<div class="a" style="left:159.2px;top:426.3500000000001px;width:8.3px;height:8.3px;background:#fff;border:0.6px solid #f1f1f1;border-radius:1px"></div>
<span class="t" style="left:206px;top:432.3500000000001px;font-size:7.7px;color:#858585;transform:translate(-50%,-50%);font-weight:normal;font-family:'Liberation Serif',serif;">14</span>
<span class="t" style="left:241px;top:431.55000000000007px;font-size:6.5px;color:#777;transform:translate(-50%,-50%);font-weight:normal;-webkit-text-stroke:.1px #777;">于晓宇</span>
<span class="t" style="left:278.7px;top:431.55000000000007px;font-size:6.5px;color:#777;transform:translate(-50%,-50%);font-weight:normal;-webkit-text-stroke:.1px #777;">男</span>
<span class="t" style="left:314.4px;top:432.3500000000001px;font-size:7.7px;color:#858585;transform:translate(-50%,-50%);font-weight:normal;font-family:'Liberation Serif',serif;">45</span>
<span class="t" style="left:337.3px;top:432.3500000000001px;font-size:7.7px;color:#858585;transform:translateY(-50%);font-weight:normal;font-family:'Liberation Serif',serif;">15633544456</span>
<span class="t" style="left:414.5px;top:431.55000000000007px;font-size:6.5px;color:#777;transform:translate(-50%,-50%);font-weight:normal;-webkit-text-stroke:.1px #777;">徐汇区</span>
<span class="t" style="left:557.5px;top:432.3500000000001px;font-size:7.7px;color:#858585;transform:translate(-50%,-50%);font-weight:normal;font-family:'Liberation Serif',serif;">2018-4-28</span>
<span class="t" style="left:660.6px;top:431.55000000000007px;font-size:6.5px;color:#777;transform:translate(-50%,-50%);font-weight:normal;-webkit-text-stroke:.1px #777;">普通会员</span>
<span class="t" style="left:711px;top:432.3500000000001px;font-size:7.7px;color:#858585;transform:translate(-50%,-50%);font-weight:normal;font-family:'Liberation Serif',serif;">153</span>
<span class="t" style="left:759.3px;top:432.3500000000001px;font-size:7.7px;color:#858585;transform:translate(-50%,-50%);font-weight:normal;font-family:'Liberation Serif',serif;">456</span>
<span class="t" style="left:849.5px;top:432.3500000000001px;font-size:7.7px;color:#858585;transform:translate(-50%,-50%);font-weight:normal;font-family:'Liberation Serif',serif;">2018-4-28</span>
<div class="a" style="left:147px;top:441.3px;width:731px;height:21.200000000000003px;background:#efefef"></div>
<div class="a" style="left:159.2px;top:447.45000000000005px;width:8.3px;height:8.3px;background:#fff;border:0.6px solid #f1f1f1;border-radius:1px"></div>
<span class="t" style="left:206px;top:453.45000000000005px;font-size:7.7px;color:#858585;transform:translate(-50%,-50%);font-weight:normal;font-family:'Liberation Serif',serif;">15</span>
<span class="t" style="left:241px;top:452.65000000000003px;font-size:6.5px;color:#777;transform:translate(-50%,-50%);font-weight:normal;-webkit-text-stroke:.1px #777;">柳儿</span>
<span class="t" style="left:278.7px;top:452.65000000000003px;font-size:6.5px;color:#777;transform:translate(-50%,-50%);font-weight:normal;-webkit-text-stroke:.1px #777;">女</span>
<span class="t" style="left:314.4px;top:453.45000000000005px;font-size:7.7px;color:#858585;transform:translate(-50%,-50%);font-weight:normal;font-family:'Liberation Serif',serif;">18</span>
<span class="t" style="left:337.3px;top:453.45000000000005px;font-size:7.7px;color:#858585;transform:translateY(-50%);font-weight:normal;font-family:'Liberation Serif',serif;">16985656546</span>
<span class="t" style="left:414.5px;top:452.65000000000003px;font-size:6.5px;color:#777;transform:translate(-50%,-50%);font-weight:normal;-webkit-text-stroke:.1px #777;">浦东新区</span>
<span class="t" style="left:557.5px;top:453.45000000000005px;font-size:7.7px;color:#858585;transform:translate(-50%,-50%);font-weight:normal;font-family:'Liberation Serif',serif;">2018-5-02</span>
<span class="t" style="left:660.6px;top:452.65000000000003px;font-size:6.5px;color:#777;transform:translate(-50%,-50%);font-weight:normal;-webkit-text-stroke:.1px #777;">普通会员</span>
<span class="t" style="left:711px;top:453.45000000000005px;font-size:7.7px;color:#858585;transform:translate(-50%,-50%);font-weight:normal;font-family:'Liberation Serif',serif;">120</span>
<span class="t" style="left:759.3px;top:453.45000000000005px;font-size:7.7px;color:#858585;transform:translate(-50%,-50%);font-weight:normal;font-family:'Liberation Serif',serif;">420</span>
<span class="t" style="left:849.5px;top:453.45000000000005px;font-size:7.7px;color:#858585;transform:translate(-50%,-50%);font-weight:normal;font-family:'Liberation Serif',serif;">2018-5-02</span>
<div class="a" style="left:624.5px;top:122px;width:96.5px;height:87px;background:#fff;box-shadow:0 1px 3px rgba(0,0,0,.13);border-bottom:2px solid #9adacd"></div>
<span class="t" style="left:635.3px;top:136.5px;font-size:7.7px;color:#666;transform:translateY(-50%);font-weight:normal;-webkit-text-stroke:.07px #666;">糖尿病</span>
<svg class="a" style="left:705px;top:132px" width="9" height="8" viewBox="0 0 9 8"><path d="M1.5 4 L3.6 6 L7.5 2" fill="none" stroke="#45bfab" stroke-width="1.15"/></svg>
<span class="t" style="left:635.3px;top:155.3px;font-size:7.7px;color:#666;transform:translateY(-50%);font-weight:normal;-webkit-text-stroke:.07px #666;">高血压</span>
<svg class="a" style="left:705px;top:150.8px" width="9" height="8" viewBox="0 0 9 8"><path d="M1.5 4 L3.6 6 L7.5 2" fill="none" stroke="#45bfab" stroke-width="1.15"/></svg>
<span class="t" style="left:635.3px;top:174.0px;font-size:7.7px;color:#666;transform:translateY(-50%);font-weight:normal;-webkit-text-stroke:.07px #666;">冠心病</span>
<svg class="a" style="left:705px;top:169.5px" width="9" height="8" viewBox="0 0 9 8"><path d="M1.5 4 L3.6 6 L7.5 2" fill="none" stroke="#45bfab" stroke-width="1.15"/></svg>
<span class="t" style="left:635.3px;top:192.8px;font-size:7.7px;color:#666;transform:translateY(-50%);font-weight:normal;-webkit-text-stroke:.07px #666;">心脏病</span>
<svg class="a" style="left:705px;top:188.3px" width="9" height="8" viewBox="0 0 9 8"><path d="M1.5 4 L3.6 6 L7.5 2" fill="none" stroke="#45bfab" stroke-width="1.15"/></svg>
<span class="t" style="left:714.4px;top:477px;font-size:6.7px;color:#888;transform:translate(-50%,-50%);font-weight:normal;-webkit-text-stroke:0;">首页</span>
<span class="t" style="left:743.3px;top:477px;font-size:6.7px;color:#888;transform:translate(-50%,-50%);font-weight:normal;-webkit-text-stroke:0;">上一页</span>
<span class="t" style="left:770.8px;top:477px;font-size:6.7px;color:#888;transform:translate(-50%,-50%);font-weight:normal;-webkit-text-stroke:0;">下一页</span>
<span class="t" style="left:796px;top:477px;font-size:6.7px;color:#888;transform:translate(-50%,-50%);font-weight:normal;-webkit-text-stroke:0;">第</span>
<span class="t" style="left:818.3px;top:477px;font-size:6.7px;color:#888;transform:translate(-50%,-50%);font-weight:normal;-webkit-text-stroke:0;">页</span>
<span class="t" style="left:841.2px;top:477px;font-size:6.7px;color:#888;transform:translate(-50%,-50%);font-weight:normal;-webkit-text-stroke:0;">尾页</span>
<span class="t" style="left:866px;top:477px;font-size:6.7px;color:#888;transform:translate(-50%,-50%);font-weight:normal;-webkit-text-stroke:0;">共<span style="color:#1fb8a3;font-weight:bold">30</span>页</span>
</body></html>
